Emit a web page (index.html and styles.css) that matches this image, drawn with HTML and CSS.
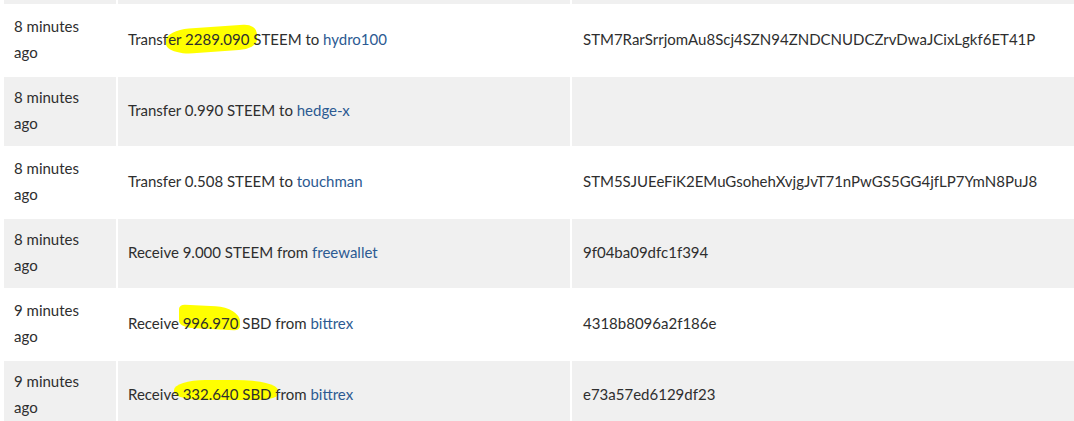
FILE: index.html
```html
<!DOCTYPE html>
<html>
<head>
<meta charset="utf-8">
<link rel="stylesheet" href="styles.css">
</head>
<body>
<table class="history">
  <colgroup>
    <col class="col-time">
    <col class="col-desc">
    <col class="col-memo">
  </colgroup>
  <tbody>
    <tr class="row-alt">
      <td class="time"></td>
      <td class="desc"></td>
      <td class="memo"></td>
    </tr>
    <tr>
      <td class="time">8 minutes ago</td>
      <td class="desc"><span class="txt">Transf<span class="hl hl-1">er 2289.090 </span>STEEM to <a href="#">hydro100</a></span></td>
      <td class="memo">STM7RarSrrjomAu8Scj4SZN94ZNDCNUDCZrvDwaJCixLgkf6ET41P</td>
    </tr>
    <tr class="row-alt">
      <td class="time">8 minutes ago</td>
      <td class="desc">Transfer 0.990 STEEM to <a href="#">hedge-x</a></td>
      <td class="memo"></td>
    </tr>
    <tr>
      <td class="time">8 minutes ago</td>
      <td class="desc">Transfer 0.508 STEEM to <a href="#">touchman</a></td>
      <td class="memo">STM5SJUEeFiK2EMuGsohehXvjgJvT71nPwGS5GG4jfLP7YmN8PuJ8</td>
    </tr>
    <tr class="row-alt">
      <td class="time">8 minutes ago</td>
      <td class="desc">Receive 9.000 STEEM from <a href="#">freewallet</a></td>
      <td class="memo">9f04ba09dfc1f394</td>
    </tr>
    <tr>
      <td class="time">9 minutes ago</td>
      <td class="desc"><span class="txt">Receive <span class="hl hl-2">996.970</span> SBD from <a href="#">bittrex</a></span></td>
      <td class="memo">4318b8096a2f186e</td>
    </tr>
    <tr class="row-alt">
      <td class="time">9 minutes ago</td>
      <td class="desc"><span class="txt">Receive <span class="hl hl-3">332.640 SBD</span> from <a href="#">bittrex</a></span></td>
      <td class="memo">e73a57ed6129df23</td>
    </tr>
  </tbody>
</table>
</body>
</html>
```
FILE: styles.css
```css
html, body {
  margin: 0;
  padding: 0;
  background: #ffffff;
  overflow: hidden;
}

body {
  font-family: "Lato", "Liberation Sans", sans-serif;
  font-size: 15px;
  color: #2e2e2e;
}

.history {
  table-layout: fixed;
  border-collapse: separate;
  border-spacing: 2px;
  width: 1074px;
  margin: -67px 0 0 2px;
}

.col-time { width: 112px; }
.col-desc { width: 452px; }

.history td {
  height: 69px;
  box-sizing: border-box;
  padding: 6px 10px 10px;
  line-height: 26px;
  vertical-align: middle;
  background: #ffffff;
  white-space: normal;
}

.history .memo {
  padding-left: 11px;
  white-space: nowrap;
  overflow: hidden;
}

.history .row-alt td {
  background: #f0f0f0;
}

.history a {
  color: #2c5a92;
  text-decoration: none;
}

.txt {
  position: relative;
  isolation: isolate;
}

.hl {
  position: relative;
}

.hl::before {
  content: "";
  position: absolute;
  z-index: -1;
  background: #ffff00;
}

.hl-1::before {
  left: -2px;
  right: -4px;
  top: -3px;
  bottom: -4px;
  border-radius: 25% 15% 20% 30% / 40% 40% 35% 45%;
  transform: skewY(-4deg);
}

.hl-2::before {
  left: -4px;
  right: -1px;
  top: -8px;
  bottom: 3px;
  border-radius: 10% 40% 10% 20% / 20% 60% 20% 30%;
  transform: skewY(3deg);
}

.hl-3::before {
  left: -9px;
  right: -6px;
  top: -5px;
  bottom: 3px;
  border-radius: 30% 40% 20% 30% / 50% 50% 30% 40%;
}
```
